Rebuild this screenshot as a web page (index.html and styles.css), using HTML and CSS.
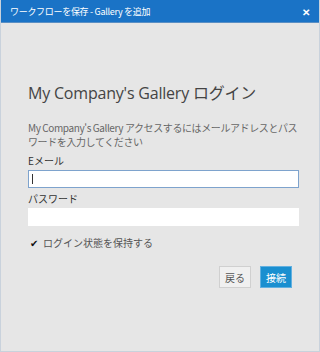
FILE: index.html
```html
<!DOCTYPE html>
<html lang="ja">
<head>
    <meta charset="UTF-8">
    <meta name="viewport" content="width=device-width, initial-scale=1.0">
    <link rel="stylesheet" href="styles.css">
</head>
<body>

<div class="window">
    <div class="titlebar">
        <span class="title">ワークフローを保存 - Gallery を追加</span>
        <span class="close">&#x2715;</span>
    </div>

    <div class="content">
        <h1>My Company's Gallery ログイン</h1>
        <p class="desc">My Company's Gallery アクセスするにはメールアドレスとパスワードを入力してください</p>

        <label class="label first">Eメール</label>
        <div class="input focused"><span class="caret"></span></div>

        <label class="label">パスワード</label>
        <div class="input"></div>

        <div class="remember">
            <span class="check">&#x2714;</span>
            <span>ログイン状態を保持する</span>
        </div>

        <div class="buttons">
            <button class="btn back">戻る</button>
            <button class="btn connect">接続</button>
        </div>
    </div>
</div>

</body>
</html>
```

FILE: styles.css
```css
body {
    margin: 0;
    font-family: "Noto Sans CJK JP", "Open Sans", sans-serif;
    background: #e6e6e6;
}

.window {
    width: 320px;
    height: 352px;
    box-sizing: border-box;
    border: 1px solid #c9d2dc;
    border-top: none;
    background: #e6e6e6;
    display: flex;
    flex-direction: column;
}

.titlebar {
    height: 22px;
    background: #1a73c6;
    color: #fff;
    display: flex;
    align-items: center;
    justify-content: space-between;
    padding: 0 9px 0 9px;
    border-bottom: 1px solid #5a8fc4;
}

.title {
    font-size: 9px;
    letter-spacing: -0.3px;
}

.close {
    font-size: 10px;
    font-weight: bold;
}

.content {
    padding: 0 20px 0 27px;
}

h1 {
    font-family: "Open Sans", "Noto Sans CJK JP", sans-serif;
    font-weight: normal;
    font-size: 16px;
    color: #444;
    margin: 58px 0 0 0;
    line-height: 24px;
    letter-spacing: -0.2px;
}

.desc {
    font-size: 10px;
    color: #666;
    line-height: 14px;
    margin: 16px 0 0 0;
    letter-spacing: -0.4px;
}

.label {
    display: block;
    font-size: 10px;
    color: #333;
    margin-top: 3px;
    line-height: 16px;
}

.label.first {
    margin-top: 4px;
}

.input {
    height: 16px;
    background: #fff;
    border: 1px solid #fff;
    margin-top: 1px;
    display: flex;
    align-items: center;
}

.input.focused {
    border-color: #7ea3cd;
}

.caret {
    width: 1px;
    height: 10px;
    background: #333;
    margin-left: 3px;
}

.remember {
    display: flex;
    align-items: center;
    gap: 5px;
    margin-top: 9px;
    font-size: 10px;
    color: #555;
}

.check {
    font-size: 10px;
    color: #111;
    margin-left: 2px;
}

.buttons {
    display: flex;
    justify-content: flex-end;
    gap: 9px;
    margin-top: 16px;
    padding-right: 7px;
}

.btn {
    font-family: "Noto Sans CJK JP", sans-serif;
    font-size: 10px;
    height: 22px;
    width: 32px;
    padding: 0;
    border: 1px solid #d0d0d0;
}

.back {
    background: #f0f0f0;
    color: #555;
}

.connect {
    background: #1a8fd0;
    border-color: #62b0e0;
    color: #fff;
}
```
